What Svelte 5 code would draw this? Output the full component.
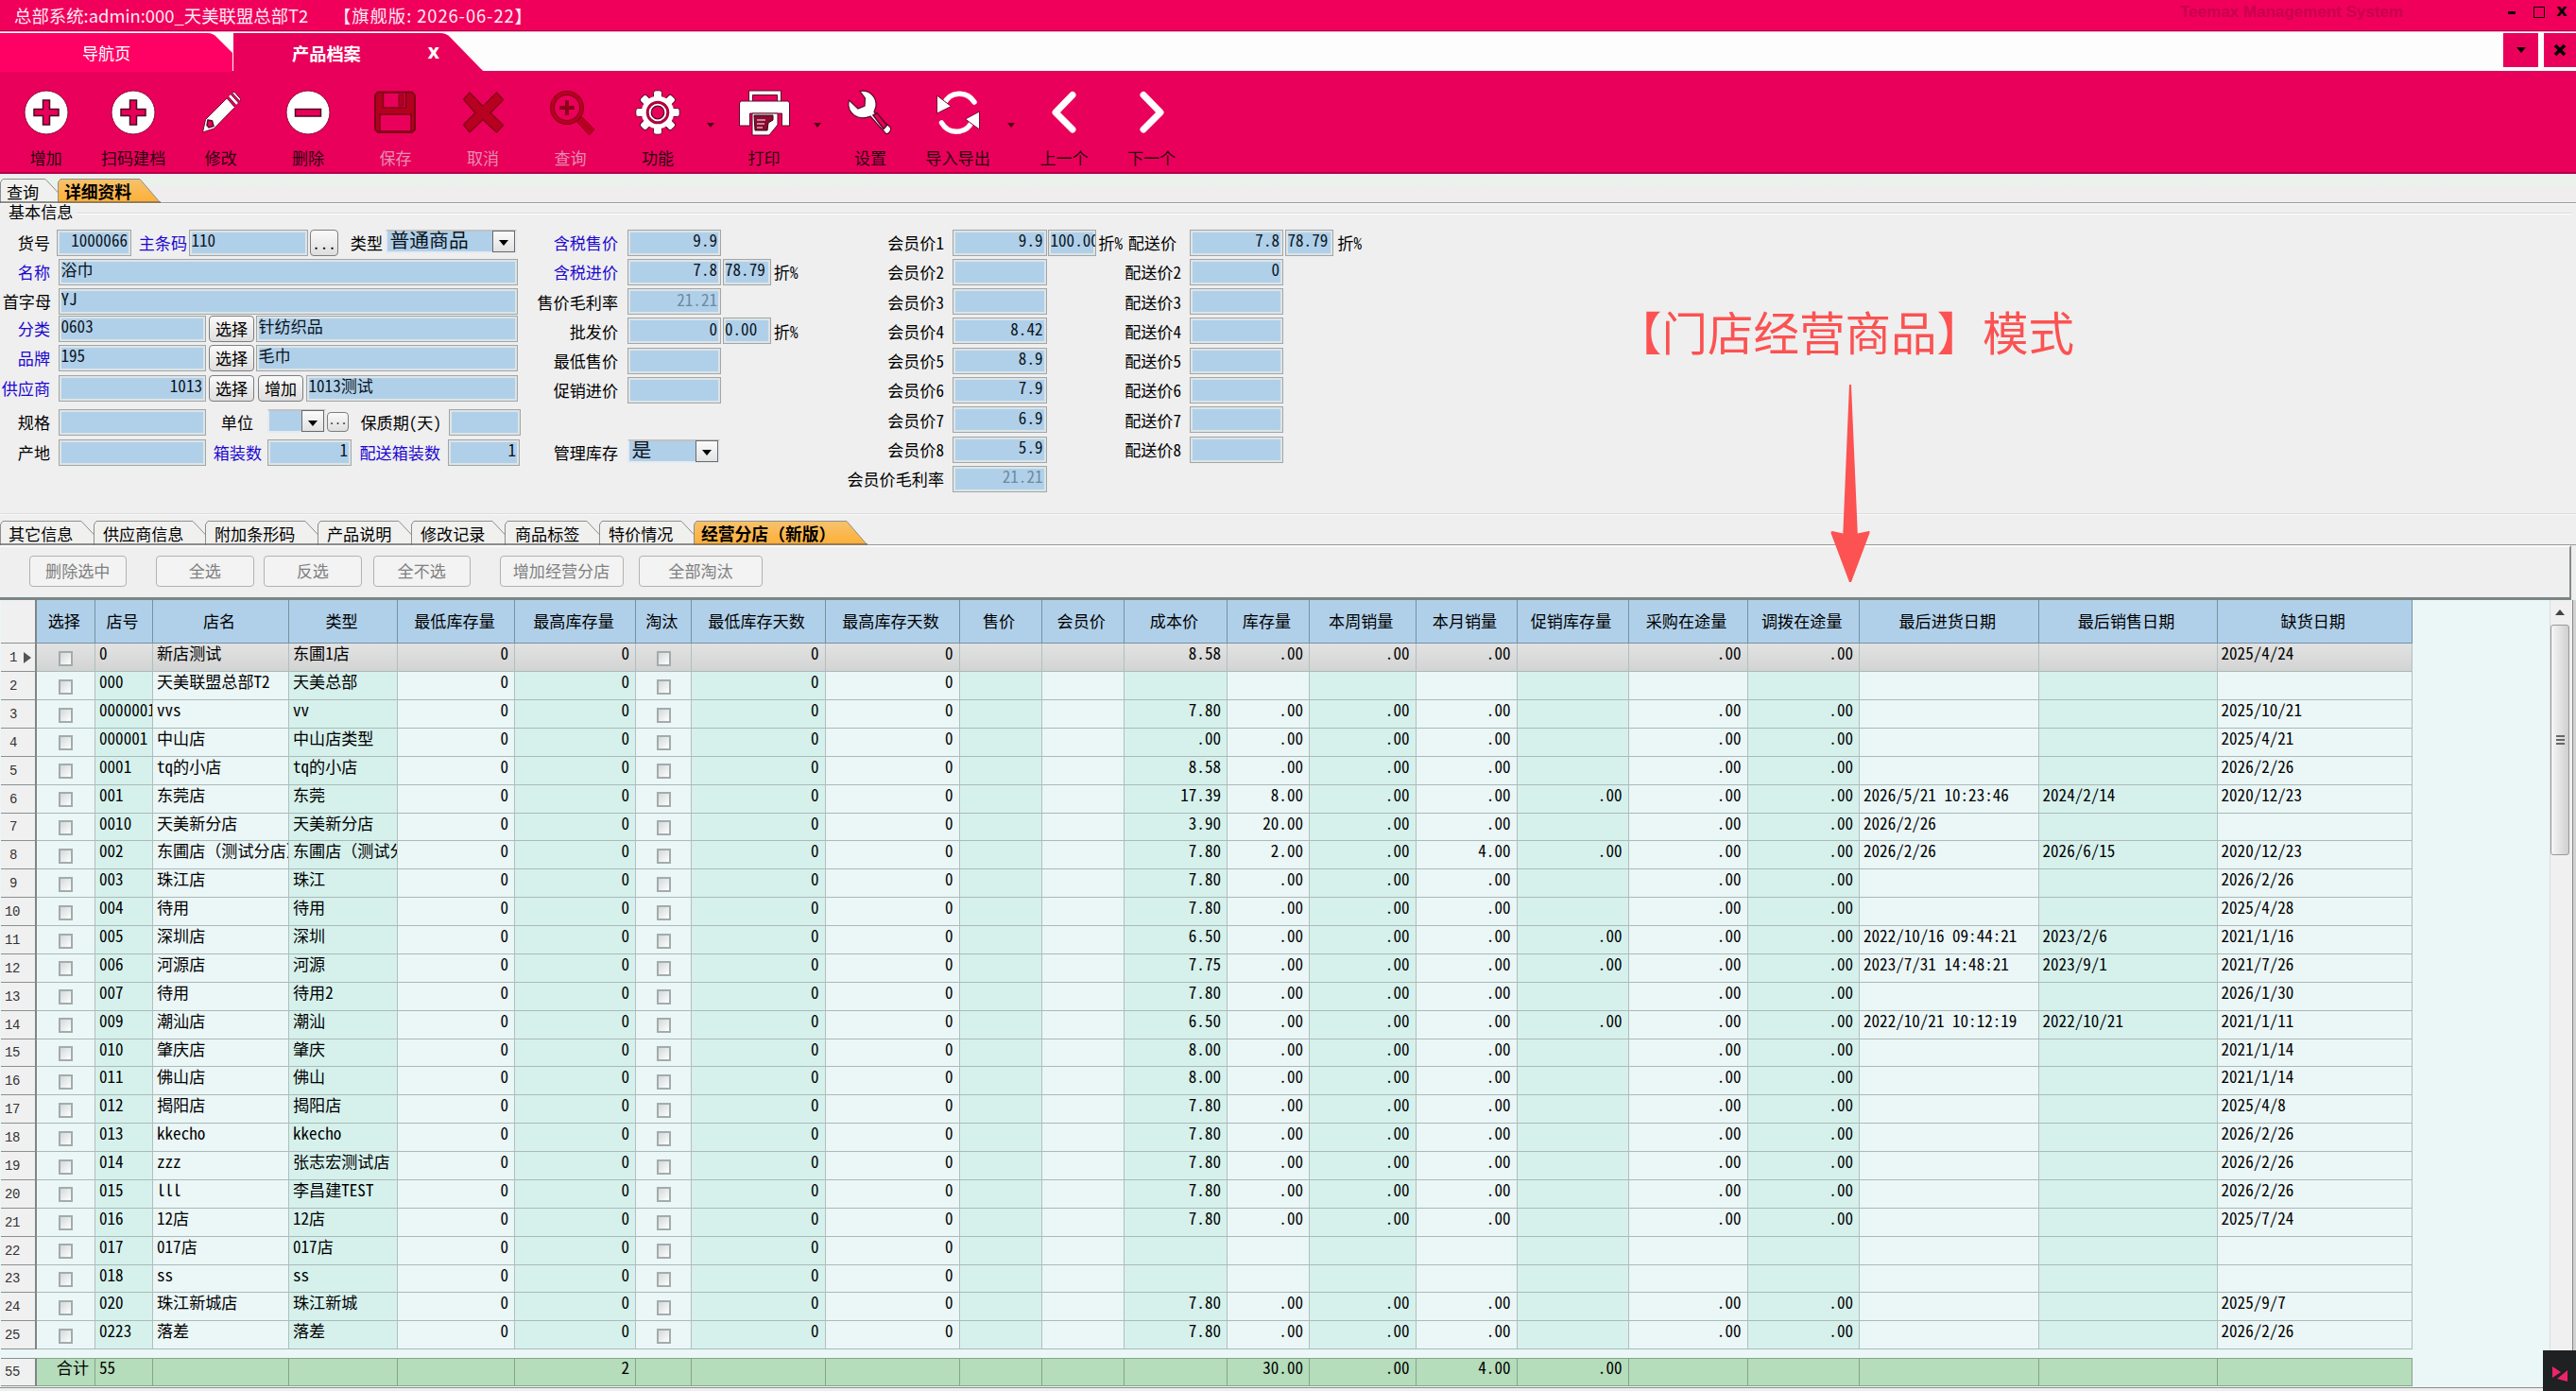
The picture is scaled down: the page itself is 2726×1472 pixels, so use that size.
<script>
  const tools = [
    { icon: 'plus', label: '增加' },
    { icon: 'plus', label: '扫码建档' },
    { icon: 'pencil', label: '修改' },
    { icon: 'minus', label: '删除' },
    { icon: 'save', label: '保存', off: true },
    { icon: 'cross', label: '取消', off: true },
    { icon: 'zoom', label: '查询', off: true },
    { icon: 'gear', label: '功能', drop: true },
    { icon: 'printer', label: '打印', drop: true },
    { icon: 'wrench', label: '设置' },
    { icon: 'sync', label: '导入导出', drop: true },
    { icon: 'prev', label: '上一个' },
    { icon: 'next', label: '下一个' }
  ];

  // Form items: k = kind, w = width, g = gap before the item, t = text
  const L = (t, w, g = 0, blue = false) => ({ k: 'label', t, w, g, blue });
  const I = (t, w, g = 0, right = false, dim = false) => ({ k: 'input', t, w, g, right, dim });
  const B = (t, w, g = 0) => ({ k: 'btn', t, w, g });
  const C = (t, w, g = 0) => ({ k: 'combo', t, w, g });

  const basic = [
    { g: 0, items: [L('货号', 53), I('1000066', 79, 7, true), L('主条码', 51, 8, true), I('110', 126, 2), B('...', 30, 2), L('类型', 34, 13), C('普通商品', 139, 3)] },
    { g: 3.5, items: [L('名称', 53, 0, true), I('浴巾', 486, 9)] },
    { g: 2.5, items: [L('首字母', 54), I('YJ', 486, 8)] },
    { g: 1.5, items: [L('分类', 53, 0, true), I('0603', 156, 9), B('选择', 48, 3), I('针纺织品', 277, 2)] },
    { g: 3, items: [L('品牌', 53, 0, true), I('195', 156, 9), B('选择', 48, 3), I('毛巾', 277, 2)] },
    { g: 3.5, items: [L('供应商', 53, 0, true), I('1013', 156, 9, true), B('选择', 48, 3), B('增加', 48, 4), I('1013测试', 224, 3)] },
    { g: 8.5, items: [L('规格', 53), I('', 156, 9), L('单位', 50, 0), C('', 62, 15), { k: 'mini', t: '...', w: 23, g: 1 }, L('保质期(天)', 91, 7), I('', 76, 8)] },
    { g: 4, items: [L('产地', 53), I('', 156, 9), L('箱装数', 59, 0, true), I('1', 89, 6, true), L('配送箱装数', 88, 6, true), I('1', 76, 8, true)] }
  ];
  const price = [
    [L('含税售价', 95, 0, true), I('9.9', 99.5, 9.5, true)],
    [L('含税进价', 95, 0, true), I('7.8', 99.5, 9.5, true), I('78.79', 51, 1.5), L('折%', 27, 2)],
    [L('售价毛利率', 95), I('21.21', 99.5, 9.5, true, true)],
    [L('批发价', 95), I('0', 99.5, 9.5, true), I('0.00', 51, 1.5), L('折%', 27, 2)],
    [L('最低售价', 95), I('', 99.5, 9.5)],
    [L('促销进价', 95), I('', 99.5, 9.5)],
    [],
    [L('管理库存', 95), C('是', 98, 10)]
  ];
  const member = ['9.9', '', '', '8.42', '8.9', '7.9', '6.9', '5.9'].map((v, i) => {
    const row = [L('会员价' + (i + 1), 110), I(v, 99.5, 9, true)];
    return i ? row : [...row, I('100.00', 51, 1.5), L('折%', 27, 1)];
  });
  member.push([L('会员价毛利率', 110), I('21.21', 99.5, 9, true, true)]);
  const delivery = ['7.8', '0', '', '', '', '', '', ''].map((v, i) => {
    const row = [L(i ? '配送价' + (i + 1) : '配送价', i ? 62 : 57), I(v, 99, i ? 9 : 14, true)];
    return i ? row : [...row, I('78.79', 51, 2), L('折%', 27, 3)];
  });

  const topTabs = [
    { t: '查询', w: 61, ov: 0, pad: 7 },
    { t: '详细资料', w: 87, pad: 7, on: true }
  ];
  const tabs = [
    { t: '其它信息', w: 99, pad: 9 },
    { t: '供应商信息', w: 118, pad: 10 },
    { t: '附加条形码', w: 119, pad: 10 },
    { t: '产品说明', w: 99, pad: 10 },
    { t: '修改记录', w: 99, pad: 10 },
    { t: '商品标签', w: 100, pad: 11 },
    { t: '特价情况', w: 100, pad: 10 },
    { t: '经营分店（新版）', w: 162, pad: 8, on: true }
  ];
  const actions = [
    ['删除选中', 103.5, 0], ['全选', 103.5, 31], ['反选', 103.5, 10.5],
    ['全不选', 103.5, 12], ['增加经营分店', 131, 30.5], ['全部淘汰', 131, 16.5]
  ];

  const heads = ['选择', '店号', '店名', '类型', '最低库存量', '最高库存量', '淘汰', '最低库存天数', '最高库存天数', '售价', '会员价', '成本价', '库存量', '本周销量', '本月销量', '促销库存量', '采购在途量', '调拨在途量', '最后进货日期', '最后销售日期', '缺货日期'];

  // no, name, type, cost, stock, month, promo, purchased, sold, out-of-stock
  const raw = [
    ['0', '新店测试', '东圃1店', '8.58', '.00', '.00', '', '', '', '2025/4/24'],
    ['000', '天美联盟总部T2', '天美总部', '', '', '', '', '', '', ''],
    ['0000001', 'vvs', 'vv', '7.80', '.00', '.00', '', '', '', '2025/10/21'],
    ['000001', '中山店', '中山店类型', '.00', '.00', '.00', '', '', '', '2025/4/21'],
    ['0001', 'tq的小店', 'tq的小店', '8.58', '.00', '.00', '', '', '', '2026/2/26'],
    ['001', '东莞店', '东莞', '17.39', '8.00', '.00', '.00', '2026/5/21 10:23:46', '2024/2/14', '2020/12/23'],
    ['0010', '天美新分店', '天美新分店', '3.90', '20.00', '.00', '', '2026/2/26', '', ''],
    ['002', '东圃店（测试分店）', '东圃店（测试分店）', '7.80', '2.00', '4.00', '.00', '2026/2/26', '2026/6/15', '2020/12/23'],
    ['003', '珠江店', '珠江', '7.80', '.00', '.00', '', '', '', '2026/2/26'],
    ['004', '待用', '待用', '7.80', '.00', '.00', '', '', '', '2025/4/28'],
    ['005', '深圳店', '深圳', '6.50', '.00', '.00', '.00', '2022/10/16 09:44:21', '2023/2/6', '2021/1/16'],
    ['006', '河源店', '河源', '7.75', '.00', '.00', '.00', '2023/7/31 14:48:21', '2023/9/1', '2021/7/26'],
    ['007', '待用', '待用2', '7.80', '.00', '.00', '', '', '', '2026/1/30'],
    ['009', '潮汕店', '潮汕', '6.50', '.00', '.00', '.00', '2022/10/21 10:12:19', '2022/10/21', '2021/1/11'],
    ['010', '肇庆店', '肇庆', '8.00', '.00', '.00', '', '', '', '2021/1/14'],
    ['011', '佛山店', '佛山', '8.00', '.00', '.00', '', '', '', '2021/1/14'],
    ['012', '揭阳店', '揭阳店', '7.80', '.00', '.00', '', '', '', '2025/4/8'],
    ['013', 'kkecho', 'kkecho', '7.80', '.00', '.00', '', '', '', '2026/2/26'],
    ['014', 'zzz', '张志宏测试店', '7.80', '.00', '.00', '', '', '', '2026/2/26'],
    ['015', 'lll', '李昌建TEST', '7.80', '.00', '.00', '', '', '', '2026/2/26'],
    ['016', '12店', '12店', '7.80', '.00', '.00', '', '', '', '2025/7/24'],
    ['017', '017店', '017店', '', '', '', '', '', '', ''],
    ['018', 'ss', 'ss', '', '', '', '', '', '', ''],
    ['020', '珠江新城店', '珠江新城', '7.80', '.00', '.00', '', '', '', '2025/9/7'],
    ['0223', '落差', '落差', '7.80', '.00', '.00', '', '', '', '2026/2/26']
  ];
  const rows = raw.map(([no, name, type, cost, stock, month, promo, inD, outD, lack]) => {
    const z = cost ? '.00' : '';
    return ['#', no, name, type, '0', '0', '#', '0', '0', '', '', cost, stock, z, month, promo, z, z, inD, outD, lack];
  });
  const total = ['合计', '55', '', '', '', '2', '', '', '', '', '', '', '30.00', '.00', '4.00', '.00', '', '', '', '', ''];
  const isNum = (i) => i >= 4 && i <= 17;
  const teeth = [0, 45, 90, 135, 180, 225, 270, 315];
</script>

{#snippet icon(name)}
  <svg class="icon" viewBox="0 0 48 48" width="48" height="48">
    {#if name === 'plus' || name === 'minus'}
      <circle cx="24" cy="24" r="23" fill="#fff" stroke="#8a0a38" stroke-width="1" />
      {#if name === 'plus'}
        <path d="M20.5 11h7v9.500h9.500v7h-9.500v9.500h-7v-9.500H11v-7h9.500z" fill="#e9005a" stroke="#4c0a20" stroke-width="1.500" />
      {:else}
        <path d="M10.500 20.500h27v7.500h-27z" fill="#e9005a" stroke="#4c0a20" stroke-width="1.500" />
      {/if}
    {:else if name === 'pencil'}
      <g stroke="#7a0a34" stroke-width="1" fill="#fff">
        <path d="M30 9l8.500 9.500L16.500 41 4.500 45 7.500 31.500z" />
        <path d="M31.500 7l2.500-2.500 8.500 9.500-2.500 2.500z" />
        <path d="M35.500 3l2.500-.800 6.500 7.500-.500 2.800z" />
        <path d="M10 32l4.500 1 1.500 5.500-5 1.500-2-2.500z" fill="#e9005a" stroke="#5a0a28" stroke-width="1.500" />
      </g>
    {:else if name === 'save'}
      <path d="M5 2.500h36l3 3.500v36l-3 3H5l-3-3V5.500z" fill="#b3001e" stroke="#7e0016" stroke-width="2" />
      <path d="M10.500 3h24v16h-24z" fill="#e9005a" stroke="#7e0016" stroke-width="1.500" />
      <path d="M27 5h5v12h-5z" fill="#b3001e" stroke="#7e0016" />
      <path d="M7 26h33v18H7z" fill="#e9005a" stroke="#7e0016" stroke-width="1.500" />
    {:else if name === 'cross'}
      <path d="M10 3l14 14.500L38.500 3l7 7.500L32 24.500l13.500 13-7 7.500L24 31.500 10 45l-6.500-8L16 24.500 3.500 10z" fill="#b80020" stroke="#8a0018" stroke-width="1.500" />
    {:else if name === 'zoom'}
      <g transform="translate(2 0)">
        <path d="M27 32l5-5 15 15-5.500 6z" fill="#b80020" stroke="#8a0018" stroke-width="1" />
        <circle cx="18" cy="19" r="15.500" fill="none" stroke="#8a0018" stroke-width="5" />
        <circle cx="18" cy="19" r="15.500" fill="none" stroke="#b80020" stroke-width="3" />
        <path d="M18 11v16M10 19h16" stroke="#8a0018" stroke-width="4" />
      </g>
    {:else if name === 'gear'}
      <g fill="#fff" stroke="#5a0a28" stroke-width="1">
        {#each teeth as a}
          <rect x="19.500" y="0.800" width="9" height="12" rx="2.500" transform="rotate({a} 24 24)" />
        {/each}
      </g>
      <circle cx="24" cy="24" r="17.300" fill="#fff" />
      <circle cx="24" cy="24" r="10.800" fill="#fff" stroke="#b0003f" stroke-width="3" />
      <circle cx="24" cy="24" r="6.800" fill="#e9005a" stroke="#4c0a20" stroke-width="1.200" />
    {:else if name === 'printer'}
      <g transform="translate(-3 0)" stroke="#5a0a28" stroke-width="1">
        <path d="M10.500 13V1h34v12h-4V5.500h-26V13z" fill="#fff" />
        <path d="M2 12h50l1.500 2v24h-8V25h-34v13H.500V14z" fill="#fff" />
        <path d="M14 25h27v12l-9 11H14z" fill="#fff" />
        <path d="M16 27h20v5l-5 3-1 8H17z" fill="#8a0a30" stroke="#33060f" />
        <path d="M19 32h9M19 36h8M19 40h6" stroke="#fff" stroke-width="1.200" />
      </g>
    {:else if name === 'wrench'}
      <path d="M13 1.500c10-2 18 6 17 16l-2 6 17.500 16.500c1 3-2 7-5 6.500L24 28c-9 4-18 1-22-7-1.500-4-1.500-7-.500-10l9.500 9 7-3 .500-8z" fill="#fff" stroke="#5a0a28" stroke-width="1.200" />
      <path d="M27 27l4-2.500 10.500 13-3.500 4z" fill="#e9005a" stroke="#5a0a28" stroke-width="1.500" />
    {:else if name === 'sync'}
      <g fill="none" stroke="#fff" stroke-width="5.500" stroke-linecap="round">
        <path d="M9 15C15 1.500 33 .500 41 13" />
        <path d="M39 33C33 47 14 48 6.500 35" />
      </g>
      <path d="M1.500 6v19l15-7.500zM46.500 42V23l-15 8z" fill="#fff" stroke="#7a0a34" stroke-width="1" />
    {:else if name === 'prev'}
      <path d="M33 5.500L15 24l18 18" fill="none" stroke="#fff" stroke-width="7" stroke-linecap="round" stroke-linejoin="round" />
    {:else if name === 'next'}
      <path d="M15 5.500L33 24 15 42" fill="none" stroke="#fff" stroke-width="7" stroke-linecap="round" stroke-linejoin="round" />
    {/if}
  </svg>
{/snippet}

{#snippet line(items)}
  {#each items as it}
    <div class="item {it.k}" class:blue={it.blue} class:right={it.right} class:dim={it.dim} style:width="{it.w}px" style:margin-left="{it.g}px">
      {#if it.k === 'combo'}
        <span class="combo-value">{it.t}</span><span class="combo-arrow"><i></i></span>
      {:else}
        <span>{it.t}</span>
      {/if}
    </div>
  {/each}
{/snippet}

{#snippet strip(list)}
  {#each list as tab}
    <div class="tab" class:on={tab.on} style:width="{tab.w}px">
      <svg class="tab-shape" width={tab.w + 24} height="26">
        <path d="M0.5 26V4L3 0.500H{tab.on ? tab.w : tab.w - 13}L{tab.on ? tab.w + 22 : tab.w + 11} 26" fill={tab.on ? 'url(#amber)' : '#f0f0ee'} stroke="#8e8e8e" />
        <path d="M0 25H{tab.on ? tab.w + 22 : tab.w + 12}" stroke="#6d6d6d" stroke-width="1.500" />
      </svg>
      <span class="tab-text" style:padding-left="{tab.pad}px">{tab.t}</span>
    </div>
  {/each}
{/snippet}

<div class="app">
  <svg class="defs" width="0" height="0">
    <defs>
      <linearGradient id="amber" x1="0" y1="0" x2="0" y2="1">
        <stop offset="0" stop-color="#f5c26e" /><stop offset="1" stop-color="#ffae33" />
      </linearGradient>
    </defs>
  </svg>

  <header class="title">
    <span class="title-main">总部系统:admin:000_天美联盟总部T2</span>
    <span class="title-ver">【旗舰版: 2026-06-22】</span>
    <span class="brand">Teemax Management System</span>
    <span class="win"><i class="min"></i><i class="max"></i><b>x</b></span>
  </header>

  <nav class="pages">
    <div class="page first">
      <svg width="247" height="42"><path d="M0 1H220Q225 1 229 5L246 22V42H0z" fill="#ff0064" /></svg>
      <span>导航页</span>
    </div>
    <div class="page second">
      <svg width="266" height="43"><path d="M0 1H219Q225 1 229 5L266 43H0z" fill="#e9005a" /></svg>
      <span>产品档案</span><b>x</b>
    </div>
    <div class="page-btns">
      <div><i class="tri"></i></div>
      <div class="last"><svg width="14" height="12"><path d="M2 1l10 10M12 1L2 11" stroke="#000" stroke-width="3.500" /></svg></div>
    </div>
  </nav>

  <div class="toolbar">
    {#each tools as tool}
      <div class="tool" class:off={tool.off}>
        {@render icon(tool.icon)}
        <span>{tool.label}</span>
      </div>
      {#if tool.drop}<div class="drop"><i></i></div>{/if}
    {/each}
  </div>

  <div class="strip top-strip">{@render strip(topTabs)}<div class="strip-rest"></div></div>

  <section class="group">
    <div class="legend"><span>基本信息</span></div>
    <div class="form">
      <div class="block basic">
        {#each basic as row}
          <div class="line" style:margin-top="{row.g}px">{@render line(row.items)}</div>
        {/each}
      </div>
      {#each [price, member, delivery] as col, i}
        <div class="block b{i}">
          {#each col as row}<div class="line">{@render line(row)}</div>{/each}
        </div>
      {/each}
    </div>
  </section>

  <div class="strip low-strip">{@render strip(tabs)}<div class="strip-rest"></div></div>

  <div class="actions">
    {#each actions as [t, w, g]}
      <button style:width="{w}px" style:margin-left="{g}px">{t}</button>
    {/each}
  </div>

  <div class="grid-area">
    <div class="grid">
      <div class="row head">
        <div class="no"></div>
        {#each heads as h}<div class="cell">{h}</div>{/each}
      </div>
      {#each rows as row, r}
        <div class="row" class:current={r === 0}>
          <div class="no">{r + 1}{#if r === 0}<i></i>{/if}</div>
          {#each row as v, i}
            <div class="cell" class:alt={i % 2 === 1} class:num={isNum(i)} class:mid={v === '#'} class:wide={v.includes('（')}>
              {#if v === '#'}<i class="check"></i>{:else}{v}{/if}
            </div>
          {/each}
        </div>
      {/each}
      <div class="row total">
        <div class="no">55</div>
        {#each total as v, i}
          <div class="cell" class:num={i === 0 || isNum(i)}>{v}</div>
        {/each}
      </div>
    </div>
    <div class="scroll">
      <div class="up"><i></i></div>
      <div class="thumb"><i></i><i></i><i></i></div>
    </div>
    <div class="edge"></div>
  </div>

  <div class="callout">
    <span>【门店经营商品】模式</span>
    <svg width="42" height="210" viewBox="0 0 42 210">
      <path d="M20 0h2l6.800 157.500 11.800-2.500Q42 155 41.500 157L22 209h-2L.500 157Q.500 155 2 155l11.300 2.500z" fill="#fc5252" />
    </svg>
  </div>

  <div class="badge">
    <svg width="18" height="18" viewBox="0 0 18 18"><path d="M1 1l9 6-9 6zM17 5v12L6 14z" fill="#ee2467" /></svg>
  </div>
</div>

<style>
  :global(body) { margin: 0; }
  .app {
    position: relative; width: 2726px; height: 1472px; overflow: hidden;
    display: flex; flex-direction: column; background: #efefef; color: #000;
    font: 17.1px/1 'Noto Sans CJK SC', sans-serif;
    font-feature-settings: 'hwid' 1; white-space: nowrap;
  }
  .app * { box-sizing: border-box; }
  i { display: block; }
  .defs { position: absolute; }

  .title {
    height: 33px; flex: none; display: flex; align-items: center; background: #f0005b;
    border-bottom: 1px solid #a80042; color: #ffe9f2; font-size: 18.4px; font-feature-settings: normal;
  }
  .title-main { margin-left: 15px; width: 338px; }
  .title-ver { width: 1954px; letter-spacing: .9px; }
  .brand { width: 347px; font: bold 17px 'Liberation Sans', sans-serif; color: #c9004f; margin-top: -7px; }
  .win { display: flex; align-items: center; color: #000; margin-top: -6px; }
  .min { width: 8px; height: 3px; background: #000; margin-right: 19px; }
  .max { width: 12px; height: 12px; border: 1px solid #000; margin-right: 12px; }
  .win b { font: bold 18px/12px 'DejaVu Sans', sans-serif; margin-top: -4px; }

  .pages { height: 43px; flex: none; display: flex; background: #fdfdfd; border-top: 1px solid #ffa5cd; border-bottom: 1px solid #c51a60; }
  .page { position: relative; color: #fff; display: flex; align-items: center; height: 42px; }
  .page svg { position: absolute; left: 0; top: 0; }
  .page span, .page b { position: relative; }
  .first { width: 247px; }
  .first span { margin-left: 87px; margin-top: 2px; }
  .second { width: 2402px; }
  .second span { margin-left: 62px; font-weight: 700; font-size: 18.2px; margin-top: 2px; }
  .second b { margin-left: 71px; font: bold 21px/20px 'Open Sans', sans-serif; margin-top: -2px; }
  .page-btns { display: flex; gap: 6px; padding-top: 1px; }
  .page-btns div { width: 37px; height: 36px; background: #e9005a; display: flex; align-items: center; justify-content: center; }
  .tri { border: 5px solid transparent; border-top: 6px solid #000; border-bottom: 0; }
  .page-btns .last { width: 34px; }

  .toolbar { height: 108px; flex: none; display: flex; background: #e9005a; padding-left: 2.300px; border-bottom: 2px solid #b30048; }
  .tool { width: 92.500px; display: flex; flex-direction: column; align-items: center; padding-top: 19px; }
  .icon { overflow: visible; }
  .tool span { margin-top: 14.500px; color: #2a0010; }
  .tool.off span { color: #e58fb2; }
  .drop { width: 20px; padding: 54px 0 0 6px; }
  .drop i { width: 0; border: 4px solid transparent; border-top: 5px solid #4a0018; border-bottom: 0; }

  .strip { display: flex; align-items: flex-end; flex: none; }
  .top-strip { height: 31px; background: linear-gradient(#f6ecf3, #eaf2ec 4px, #eaf2ec 12px, #efeded 14px); }
  .low-strip { height: 32px; }
  .strip-rest { flex: 1; border-bottom: 1px solid #999; align-self: stretch; margin-left: 22px; }
  .tab { position: relative; height: 26px; }
  .tab-shape { position: absolute; left: 0; top: 0; }
  .tab-text { position: relative; display: block; line-height: 27px; }
  .tab.on .tab-text { font-weight: 700; font-size: 17.800px; font-feature-settings: normal; }

  .group { height: 330px; flex: none; border-top: 1px solid #fff; border-bottom: 1px solid #fafafa; box-shadow: inset 0 -1px #dcdcdc; }
  .legend { display: flex; height: 18px; align-items: flex-start; }
  .legend span { padding-left: 9px; margin-top: -1px; }
  .legend::after { content: ''; flex: 1; border-top: 1px solid #dcdcdc; border-bottom: 1px solid #fff; margin: 9px 5px 0 4px; }
  .form { display: flex; padding-top: 8.500px; }
  .block { display: flex; flex-direction: column; gap: 3.300px; }
  .basic { width: 559px; gap: 0; }
  .b0 { width: 330px; }
  .b0 .line:last-child { margin-top: 3px; }
  .b1 { width: 299px; }
  .line { display: flex; height: 28px; align-items: stretch; }
  .item { flex: none; display: flex; align-items: center; }
  .label { justify-content: flex-end; }
  .label.blue { color: #2107cf; }
  .input {
    border: 1.500px solid #a2a6a8; background: #b0d0ea; box-shadow: inset 0 0 0 2px #dde4e6;
    padding: 0 3px 6px 1.500px; overflow-x: clip; color: #0c1420;
  }
  .input:not(.right) { padding-right: 0; }
  .input.right { justify-content: flex-end; }
  .input.dim { color: #6d8a9e; }
  .btn, .mini { justify-content: center; background: linear-gradient(#fafafa, #dedede); border: 1.500px solid #7d7d7d; border-radius: 4px; }
  .mini { height: 21px; margin-top: 3px; padding-bottom: 6px; font-size: 13px; }
  .combo { height: 25px; background: #b0d0ea; border: 2px solid #e6eaee; border-top-color: #c2c2c2; font-size: 20.800px; }
  .combo-value { flex: 1; margin-top: -3px; padding-left: 2.500px; color: #0c1420; }
  .combo-arrow { width: 24px; height: 23px; border: 1px solid #6a6a6a; background: linear-gradient(#fbfbfb, #e2e2e2); display: flex; align-items: center; justify-content: center; }
  .combo-arrow i { border: 5.500px solid transparent; border-top: 6px solid #000; border-bottom: 0; margin-top: 4px; }

  .actions { height: 58px; flex: none; display: flex; padding: 10px 0 0 30.500px; margin-right: 5px; border-top: 2px solid #fafafa; border-right: 2px solid #858b8b; border-bottom: 3px solid #7b8686; }
  .actions button { height: 33px; margin-top: -1px; padding: 0 0 2px; border: 1.500px solid #b2b2b2; border-radius: 4px; background: #f3f3f3; color: #808080; font: inherit; font-feature-settings: inherit; }

  .grid-area { height: 834px; flex: none; display: flex; background: #ebf6f6; border-bottom: 1px solid #8d8d8d; }
  .grid { width: 2698px; padding-left: 1px; }
  .row {
    display: grid; height: 29.880px; width: 2553px;
    grid-template-columns: 37.500px 62.500px 61px 144px 115px 124px 128px 58.500px 142px 142px 87px 87.500px 109px 87px 112.500px 107px 118px 126px 118.500px 189.500px 189px 206.500px;
  }
  .cell { min-width: 0; border-right: 1px solid #b0bfbf; border-bottom: 1px solid #abb9b9; padding: 0 0 0 4px; overflow-x: clip; line-height: 19px; background: #ebf6f6; }
  .cell.alt { background: #d6f1ec; }
  .cell.num { text-align: right; padding-right: 6px; }
  .cell.mid { padding: 7.500px 0 0 1px; }
  .cell.wide { font-feature-settings: normal; }
  .check { width: 15px; height: 16px; margin: 0 auto; border: 2px solid #a3abab; background: linear-gradient(135deg, #d2d8d8, #fff); }
  .no { display: flex; align-items: center; justify-content: space-between; padding: 1px 4px 0 4px; background: #f0f0f0; border-right: 2px solid #7f8585; border-bottom: 1.500px solid #8b9090; font: 14px 'Liberation Mono', monospace; color: #333; letter-spacing: -.5px; }
  .row:nth-child(-n + 10) .no { padding-left: 9px; }
  .no i { border: 6px solid transparent; border-left: 8px solid #555; border-right: 0; }
  .current .cell, .current .cell.alt { background: linear-gradient(#e2e2e2, #d2d4d3); }
  .head { height: 46.300px; }
  .head .cell { display: flex; align-items: center; justify-content: center; padding: 0 3px 2px 0; background: #b0d0ea; border-color: #7592a2; }
  .head .no { border-bottom-width: 1px; }
  .total { margin-top: 8.400px; height: 30px; }
  .total .cell { background: #b5dcbb; border: solid #86a48b; border-width: 1.500px 1px 1.500px 0; line-height: 18px; }
  .total .no { border-top: 1px solid #8b9090; }
  .scroll { width: 21px; background: #f0f0f0; border-left: 1px solid #ddd; }
  .up { height: 26px; display: flex; justify-content: center; align-items: center; }
  .up i { border: 5px solid transparent; border-bottom: 6px solid #444; border-top: 0; }
  .thumb { height: 244px; border: 1.500px solid #989898; border-radius: 3px; background: linear-gradient(90deg, #f6f6f6, #cfcfcf); display: flex; flex-direction: column; justify-content: center; align-items: center; gap: 2px; }
  .thumb i { width: 9px; height: 2px; background: #666; }
  .edge { flex: 1; background: #d3d3d6; border-left: 3px solid #f0f0f0; box-shadow: inset 1px 0 #888; }

  .callout { position: absolute; left: 1710px; top: 326px; width: 500px; color: #fc5252; font-size: 48.500px; font-feature-settings: normal; }
  .callout span { display: block; height: 81px; line-height: 48px; }
  .callout svg { display: block; margin-left: 227px; }
  .badge { position: absolute; right: 0; bottom: 0; width: 35px; height: 43px; background: #1e2022; display: flex; align-items: center; padding: 6px 0 0 9px; }
</style>
